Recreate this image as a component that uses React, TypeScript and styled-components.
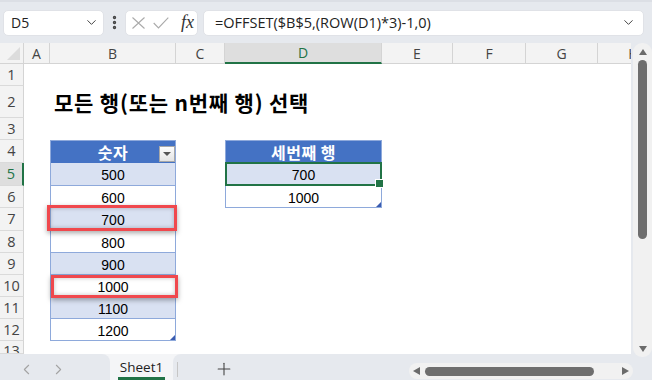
import styled, { createGlobalStyle } from "styled-components";
import { ChevronDown, ChevronLeft, ChevronRight, EllipsisVertical, Plus } from "lucide-react";

const GlobalStyle = createGlobalStyle`
  * { box-sizing: border-box; }
  html, body { margin: 0; padding: 0; background: #e6e9ee; }
  body { font-family: "Liberation Sans", Arial, sans-serif; }
`;

const COLUMNS = ["A", "B", "C", "D", "E", "F", "G", "H"];
const COL_WIDTHS = [24, 26, 126, 49, 157, 71, 73, 72, 72];
const ROW_HEIGHTS = [22, 32, 22, 23, 23, 22, 23, 22, 22, 22, 22, 22, 13];
const NUMBERS = [500, 600, 700, 800, 900, 1000, 1100, 1200];

const gridCols = COL_WIDTHS.map((w) => `${w}px`).join(" ");
const gridRows = ["21px", ...ROW_HEIGHTS.map((h) => `${h}px`)].join(" ");

const GREEN = "#217346";
const TABLE_LINE = "#8ea9db";

const App = () => {
  return (
    <>
      <GlobalStyle />
      <Window>
        <TopBar>
          <NameBox>
            <span>D5</span>
            <ChevronDown size={15} strokeWidth={1.6} color="#444" />
          </NameBox>
          <Dots>
            <EllipsisVertical size={17} strokeWidth={2.8} color="#444" />
          </Dots>
          <EditBox>
            <svg width="13" height="12" viewBox="0 0 13 12">
              <path d="M0.5 0.5 L12.5 11.5 M12.5 0.5 L0.5 11.5" stroke="#aaa" strokeWidth="1.1" fill="none" />
            </svg>
            <svg width="16" height="12" viewBox="0 0 16 12">
              <polyline points="0.7,6 5.5,11 15.3,0.7" stroke="#aaa" strokeWidth="1.1" fill="none" />
            </svg>
            <Fx>fx</Fx>
          </EditBox>
          <FormulaBox>
            <span>=OFFSET($B$5,(ROW(D1)*3)-1,0)</span>
            <ChevronDown size={15} strokeWidth={1.6} color="#444" />
          </FormulaBox>
        </TopBar>

        <Body>
          <Sheet>
            <Corner />
            {COLUMNS.map((c, i) => (
              <ColHeader key={c} $col={i + 2} $active={c === "D"}>
                {c}
              </ColHeader>
            ))}
            {ROW_HEIGHTS.map((_, i) => (
              <RowHeader key={i} $row={i + 2} $active={i + 1 === 5} $cut={i === ROW_HEIGHTS.length - 1}>
                {i + 1}
              </RowHeader>
            ))}

            <Title $row={3} $col={3}>모든 행(또는 n번째 행) 선택</Title>

            <HeadCell $row={5} $col={3}>
              숫자
              <FilterButton />
            </HeadCell>
            {NUMBERS.map((n, i) => (
              <DataCell key={n} $row={6 + i} $col={3} $band={i % 2 === 0} $last={i === NUMBERS.length - 1}>
                {n}
                {n === 700 && <Mark $top={-3} $left={-4} $right={-2} $bottom={-1} />}
                {n === 1000 && <Mark $top={0} $left={0} $right={-3} $bottom={-2} />}
              </DataCell>
            ))}

            <HeadCell $row={5} $col={5}>세번째 행</HeadCell>
            <DataCell $row={6} $col={5} $band>
              700
              <Selection />
            </DataCell>
            <DataCell $row={7} $col={5} $last>
              1000
            </DataCell>
          </Sheet>

          <VScroll>
            <Arrow $dir="up" />
            <VThumb />
            <Spacer />
            <Arrow $dir="down" />
          </VScroll>
        </Body>

        <BottomBar>
          <NavBox>
            <ChevronLeft size={17} strokeWidth={1.5} color="#a3a3a3" />
            <ChevronRight size={17} strokeWidth={1.5} color="#a3a3a3" />
          </NavBox>
          <SheetTab>
            <TabLabel>Sheet1</TabLabel>
          </SheetTab>
          <TabTail>
            <Divider />
            <AddSheet>
              <Plus size={20} strokeWidth={1.3} color="#444" />
            </AddSheet>
            <HScroll>
              <Arrow $dir="left" />
              <HThumb />
              <Spacer />
              <Arrow $dir="right" />
            </HScroll>
          </TabTail>
        </BottomBar>
      </Window>
    </>
  );
};

const Window = styled.div`
  width: 652px;
  height: 380px;
  display: flex;
  flex-direction: column;
  background: #e6e9ee;
  overflow: hidden;
`;

const TopBar = styled.header`
  height: 43px;
  flex: 0 0 43px;
  display: flex;
  align-items: center;
  padding: 0 8px 0 3px;
  border-top: 2px solid #dcdfe5;
`;

const Box = styled.div`
  height: 26px;
  background: #fff;
  border: 1px solid #e0e2e7;
  border-radius: 5px;
  display: flex;
  align-items: center;
  font-family: "Open Sans", sans-serif;
  color: #222;
`;

const NameBox = styled(Box)`
  width: 101px;
  justify-content: space-between;
  padding: 0 4px 0 7px;
  font-size: 14px;
`;

const Dots = styled.div`
  width: 21px;
  display: flex;
  justify-content: center;
`;

const EditBox = styled(Box)`
  width: 73px;
  padding-left: 6px;
  gap: 8px;
`;

const Fx = styled.span`
  font-family: "Liberation Serif", serif;
  font-style: italic;
  font-size: 18px;
  color: #333;
  margin-left: 4px;
`;

const FormulaBox = styled(Box)`
  flex: 1;
  margin-left: 5px;
  justify-content: space-between;
  padding: 0 7px 0 11px;
  font-size: 14.5px;
`;

const Body = styled.div`
  height: 311px;
  flex: 0 0 311px;
  display: flex;
  gap: 2px;
`;

const Sheet = styled.div`
  width: 631px;
  flex: 0 0 631px;
  height: 311px;
  background: #fff;
  display: grid;
  grid-template-columns: ${gridCols};
  grid-template-rows: ${gridRows};
  overflow: hidden;
`;

const Corner = styled.div`
  grid-row: 1;
  grid-column: 1;
  position: relative;
  background: #f3f3f3;
  border-right: 1px solid #d4d4d4;
  border-bottom: 1px solid #d4d4d4;
  &::after {
    content: "";
    position: absolute;
    right: 3px;
    bottom: 3px;
    border-left: 13px solid transparent;
    border-bottom: 13px solid #dcdcdc;
  }
`;

const ColHeader = styled.div<{ $col: number; $active?: boolean }>`
  grid-row: 1;
  grid-column: ${(p) => p.$col};
  display: flex;
  align-items: center;
  justify-content: center;
  background: ${(p) => (p.$active ? "#dedede" : "#f3f3f3")};
  color: ${(p) => (p.$active ? GREEN : "#444")};
  border-right: 1px solid #d4d4d4;
  border-bottom: ${(p) => (p.$active ? `2px solid ${GREEN}` : "1px solid #d4d4d4")};
  font-family: "Open Sans", sans-serif;
  font-size: 14px;
`;

const RowHeader = styled.div<{ $row: number; $active?: boolean; $cut?: boolean }>`
  grid-column: 1;
  grid-row: ${(p) => p.$row};
  display: flex;
  justify-content: center;
  align-items: ${(p) => (p.$cut ? "flex-start" : "center")};
  line-height: 20px;
  overflow: hidden;
  background: ${(p) => (p.$active ? "#dedede" : "#f3f3f3")};
  color: ${(p) => (p.$active ? GREEN : "#444")};
  border-right: ${(p) => (p.$active ? `2px solid ${GREEN}` : "1px solid #d4d4d4")};
  border-bottom: 1px solid #dadada;
  font-family: "Open Sans", sans-serif;
  font-size: 14.5px;
`;

const Cell = styled.div<{ $row: number; $col: number }>`
  grid-row: ${(p) => p.$row};
  grid-column: ${(p) => p.$col};
  position: relative;
  display: flex;
  align-items: center;
  justify-content: center;
`;

const Title = styled(Cell)`
  grid-column: ${(p) => p.$col} / span 6;
  justify-content: flex-start;
  padding-left: 4px;
  white-space: nowrap;
  font-family: "Noto Sans CJK KR", sans-serif;
  font-weight: 700;
  font-size: 21px;
  letter-spacing: 0.8px;
  color: #000;
`;

const HeadCell = styled(Cell)`
  background: #4472c4;
  border: 1px solid ${TABLE_LINE};
  border-bottom: none;
  color: #fff;
  font-family: "Noto Sans CJK KR", sans-serif;
  font-weight: 700;
  font-size: 16px;
  letter-spacing: 0.5px;
`;

const FilterButton = styled.span`
  position: absolute;
  right: 0;
  top: 5px;
  width: 16px;
  height: 16px;
  border: 1px solid #a8a8a8;
  background: linear-gradient(#fdfdfd, #e4e4e4);
  &::after {
    content: "";
    position: absolute;
    left: 3px;
    top: 5px;
    border-left: 4px solid transparent;
    border-right: 4px solid transparent;
    border-top: 4px solid #555;
  }
`;

const DataCell = styled(Cell)<{ $band?: boolean; $last?: boolean }>`
  background: ${(p) => (p.$band ? "#d9e1f2" : "#fff")};
  border-left: 1px solid ${TABLE_LINE};
  border-right: 1px solid ${TABLE_LINE};
  border-bottom: 1px solid ${TABLE_LINE};
  padding-top: 2px;
  font-size: 14px;
  color: #000;
  &::after {
    content: "";
    display: ${(p) => (p.$last ? "block" : "none")};
    position: absolute;
    right: 0;
    bottom: 0;
    border-left: 5px solid transparent;
    border-bottom: 5px solid #3a5bb0;
  }
`;

const Mark = styled.span<{ $top: number; $left: number; $right: number; $bottom: number }>`
  position: absolute;
  top: ${(p) => p.$top}px;
  left: ${(p) => p.$left}px;
  right: ${(p) => p.$right}px;
  bottom: ${(p) => p.$bottom}px;
  border: 3px solid #f0484d;
  box-shadow: 0 2px 5px rgba(0, 0, 0, 0.35), inset 0 0 4px rgba(0, 0, 0, 0.25);
  pointer-events: none;
  z-index: 2;
`;

const Selection = styled.span`
  position: absolute;
  inset: -1px;
  border: 2px solid ${GREEN};
  z-index: 2;
  &::after {
    content: "";
    position: absolute;
    right: -4px;
    bottom: -4px;
    width: 7px;
    height: 7px;
    background: ${GREEN};
    border: 1px solid #fff;
  }
`;

const VScroll = styled.div`
  position: relative;
  z-index: 1;
  width: 19px;
  height: 314px;
  flex: 0 0 19px;
  background: #f1f1f1;
  border-radius: 9px;
  display: flex;
  flex-direction: column;
  align-items: center;
  padding: 6px 0 5px;
`;

const VThumb = styled.div`
  width: 9px;
  height: 179px;
  margin-top: 5px;
  border-radius: 5px;
  background: #6e6e6e;
`;

const Spacer = styled.div`
  flex: 1;
`;

const Arrow = styled.span<{ $dir: "up" | "down" | "left" | "right" }>`
  width: 0;
  height: 0;
  border-style: solid;
  border-color: transparent;
  border-width: ${(p) =>
    p.$dir === "up"
      ? "0 4.5px 6px"
      : p.$dir === "down"
      ? "6px 4.5px 0"
      : p.$dir === "left"
      ? "4px 7px 4px 0"
      : "4px 0 4px 7px"};
  ${(p) =>
    p.$dir === "up"
      ? "border-bottom-color: #6b6b6b;"
      : p.$dir === "down"
      ? "border-top-color: #6b6b6b;"
      : p.$dir === "left"
      ? "border-right-color: #6b6b6b;"
      : "border-left-color: #6b6b6b;"}
`;

const BottomBar = styled.footer`
  height: 26px;
  flex: 0 0 26px;
  display: flex;
  background: #f4f5f7;
`;

const NavBox = styled.div`
  width: 110px;
  background: #e6e9ee;
  border-top-right-radius: 8px;
  display: flex;
  align-items: center;
  padding: 5px 0 0 18px;
  gap: 15px;
`;

const SheetTab = styled.div`
  width: 63px;
  display: flex;
  flex-direction: column;
  align-items: center;
  justify-content: flex-end;
`;

const TabLabel = styled.span`
  font-family: "Open Sans", sans-serif;
  font-size: 13.5px;
  line-height: 19px;
  color: #222;
  padding: 0 1.5px;
  border-bottom: 3px solid ${GREEN};
`;

const TabTail = styled.div`
  flex: 1;
  background: #e6e9ee;
  border-top-left-radius: 8px;
  display: flex;
  align-items: center;
  padding-top: 4px;
`;

const Divider = styled.span`
  width: 1px;
  height: 15px;
  margin-left: 4px;
  background: #c6c6c6;
`;

const AddSheet = styled.span`
  display: flex;
  margin-left: 36px;
`;

const HScroll = styled.div`
  width: 224px;
  height: 16px;
  margin: 4px 19px 0 auto;
  background: #f1f1f1;
  border-radius: 8px;
  display: flex;
  align-items: center;
  padding: 0 4px;
`;

const HThumb = styled.div`
  width: 169px;
  height: 9px;
  margin-left: 5px;
  border-radius: 5px;
  background: #6e6e6e;
`;

export default App;
